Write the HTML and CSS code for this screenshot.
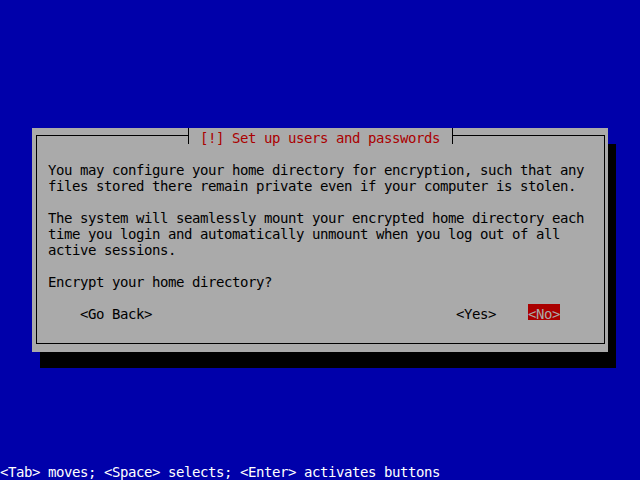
FILE: index.html
```html
<!DOCTYPE html>
<html>
<head>
<meta charset="utf-8">
<link rel="stylesheet" href="styles.css">
</head>
<body>
<div class="screen">
  <div class="dialog">
    <div class="frame">
      <div class="title"><span class="tee tee-l"></span><span class="title-text"> [!] Set up users and passwords </span><span class="tee tee-r"></span></div>
      <div class="text">
        <div class="line">You may configure your home directory for encryption, such that any</div>
        <div class="line">files stored there remain private even if your computer is stolen.</div>
        <div class="line">&nbsp;</div>
        <div class="line">The system will seamlessly mount your encrypted home directory each</div>
        <div class="line">time you login and automatically unmount when you log out of all</div>
        <div class="line">active sessions.</div>
        <div class="line">&nbsp;</div>
        <div class="line">Encrypt your home directory?</div>
        <div class="line">&nbsp;</div>
      </div>
      <div class="buttons">
        <span class="btn btn-back">&lt;Go Back&gt;</span>
        <span class="spacer"></span>
        <span class="btn btn-yes">&lt;Yes&gt;</span>
        <span class="btn btn-no">&lt;No&gt;</span>
      </div>
    </div>
  </div>
  <div class="help">&lt;Tab&gt; moves; &lt;Space&gt; selects; &lt;Enter&gt; activates buttons</div>
</div>
</body>
</html>
```

FILE: styles.css
```css
html, body {
  margin: 0;
  padding: 0;
  background: #0000aa;
}

.screen {
  width: 640px;
  height: 480px;
  display: flex;
  flex-direction: column;
  background: #0000aa;
  font-family: "DejaVu Sans Mono", monospace;
  font-size: 14px;
  letter-spacing: -0.4287px;
  line-height: 20px;
  overflow: hidden;
}

.dialog {
  margin: 128px 0 0 32px;
  width: 576px;
  height: 224px;
  box-sizing: border-box;
  padding: 7px 3px 8px 4px;
  background: #aaaaaa;
  box-shadow: 8px 16px 0 #000000;
}

.frame {
  position: relative;
  height: 100%;
  box-sizing: border-box;
  border: 1px solid #000000;
  padding: 24px 0 0 11px;
  color: #000000;
}

.title {
  position: absolute;
  left: 147px;
  top: -8px;
  height: 16px;
  display: flex;
}

.tee {
  position: relative;
  width: 8px;
  height: 16px;
}

.tee::before {
  content: "";
  position: absolute;
  left: 4px;
  top: 0;
  width: 1px;
  height: 16px;
  background: #000000;
}

.tee-l {
  background: linear-gradient(to right, transparent 5px, #aaaaaa 5px);
}

.tee-r {
  background: linear-gradient(to right, #aaaaaa 4px, transparent 4px);
}

.title-text {
  white-space: pre;
  color: #aa0000;
  background: #aaaaaa;
  height: 16px;
}

.line {
  white-space: pre;
  height: 16px;
}

.buttons {
  display: flex;
  height: 16px;
  padding: 0 44px 0 32px;
}

.btn {
  white-space: pre;
  height: 16px;
}

.spacer {
  flex: 1;
}

.btn-no {
  margin-left: 32px;
  width: 32px;
  background: #aa0000;
  color: #aaaaaa;
}

.help {
  margin-top: auto;
  height: 16px;
  line-height: 16px;
  white-space: pre;
  color: #ffffff;
}
```
